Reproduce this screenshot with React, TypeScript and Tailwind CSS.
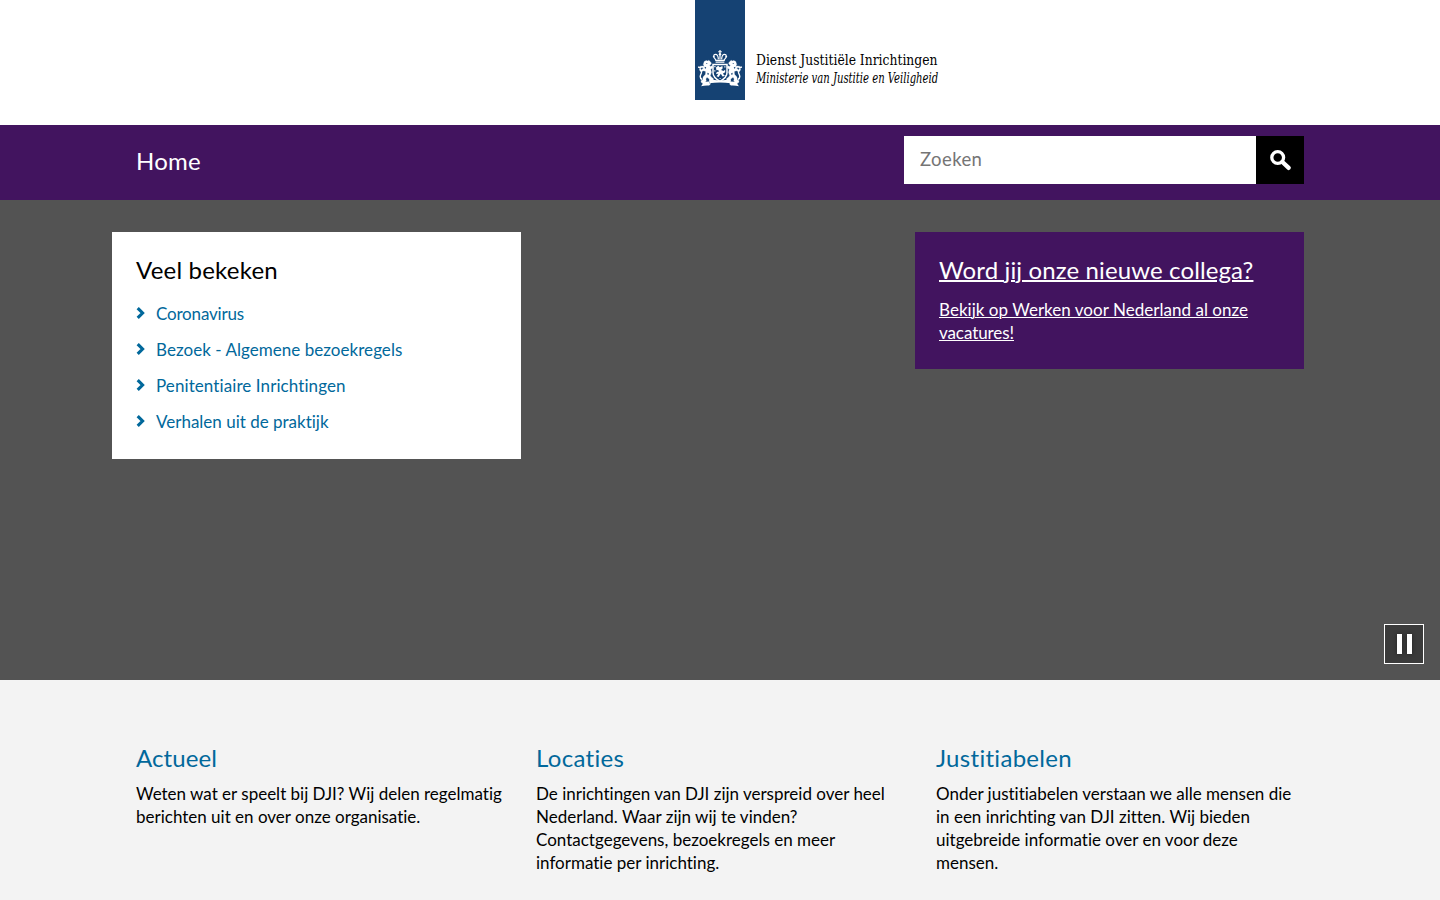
function Crest() {
  return (
    <g fill="#fff">
      {/* crown */}
      <path d="M24.400 50h1.200v1.200h1.200v1.100h-1.200v1h-1.200v-1h-1.200v-1.100h1.200z" />
      <g fill="none" stroke="#fff" strokeWidth="1.200">
        <path d="M21 60c-3.400-3-2.600-5.600-.4-5.600 1.800 0 2.600 2 2.800 5M29 60c3.400-3 2.600-5.600.4-5.600-1.800 0-2.600 2-2.800 5M25 53.500v6" />
        <path d="M20.200 60.400h9.600M20.600 62.200h8.800" />
      </g>
      <circle cx="25" cy="54.300" r="1.200" />
      <circle cx="18.700" cy="56.600" r=".9" />
      <circle cx="31.300" cy="56.600" r=".9" />
      {/* shield */}
      <path
        d="M18 64.400h14v8.400c0 4-3 6.400-7 8.600-4-2.200-7-4.600-7-8.600z"
        fill="#154273"
        stroke="#fff"
        strokeWidth="1.500"
      />
      <path d="M21 67.500l2.200-1.700 1.600 1.400 2.600-1.200.3 2.300-1.600 1.600 2.300 1.200 1.800-1.300v2.500l-2.200 1.300 1.500 2.500-2 .3-1.700-2.600-2.200 3.200-2-.7 1.800-2.500-2.400.3.800-2.100 2.300-.6-1-1.500-1.700.3z" />
      <path d="M19.300 66h1.200v1.200h-1.200zM29.300 66.200h1.200v1.200h-1.200zM19.200 70.200h1.200v1.200h-1.200zM29.600 75h1v1h-1zM24.600 78h1v1h-1z" />
      <g id="lion">
        {/* head, mane and body */}
        <path
          d="M9.200 61.500l2-.9 1.700.5.900-.8 1.300 1.100 1.300 1.700-.5 1.500-1.300.5.600 1.400 2.200-.8.300 2.300-2 1.300.8 3-1.200 3.400 1.600 1.900 1.600 1.200-.4 1.900-3.300-.2-.5-1.500-2.300-1.700-1.200 1.600.5 2-1.200 1.200-3.900.1-.2-1.500 1.800-1 .3-2.800 2.400-2.600.2-2.700-1.900-.9-2.600 1-1.500-1.300.2-1.200 1.700.5 1.900-1.700-1.700-.4-1.500 1-1.200-1.200 1.200-1.100 2.100-.3 1.800.2-.9-1.700z"
          stroke="#fff"
          strokeWidth=".3"
        />
        {/* tail */}
        <path
          d="M7.200 79.500c-3.400-1.500-1.600-4.800-.8-6.500.9-2.300-2.100-2.400-1.100-4.600M5 67.600l-1.900-.6"
          fill="none"
          stroke="#fff"
          strokeWidth="1.400"
        />
        <path d="M11.200 63.200h1.100v.9h-1.100zM9.900 66.700l1.300.7-.4 1.300-1.200-.6zM12.600 72.700l1.200.5-.3 1.700-1.200-.6z" fill="#154273" />
      </g>
      <use href="#lion" transform="matrix(-1 0 0 1 50 0)" />
      {/* ribbon */}
      <path d="M14.200 79.600c7 1.100 14.600 1.100 21.600 0v3.700c-7-1-14.600-1-21.600 0zM13.800 81.400l-7.800.9 1.800 1.500-1.700 2.400c2.600-.6 5.400-.8 8-.6l1.600-1.700zM36.200 81.400l7.800.9-1.800 1.500 1.700 2.400c-2.600-.6-5.400-.8-8-.6l-1.600-1.700z" />
    </g>
  );
}

function Logo() {
  return (
    <svg width="250" height="100" viewBox="0 0 250 100" className="block" role="img" aria-label="Dienst Justitiële Inrichtingen">
      <rect width="50" height="100" fill="#154273" />
      <Crest />
      <text
        transform="translate(61 65) scale(.948 1)"
        className="fill-black text-[14.500px] font-['DejaVu_Serif',serif] [font-stretch:75%]"
      >
        Dienst Justitiële Inrichtingen
      </text>
      <text
        transform="translate(61 82.500) scale(.8 1)"
        className="fill-black text-[14px] italic font-['DejaVu_Serif',serif] [font-stretch:75%]"
      >
        Ministerie van Justitie en Veiligheid
      </text>
    </svg>
  );
}

function Chevron() {
  return (
    <svg width="20" height="12" viewBox="0 0 20 12" className="-mt-px shrink-0" fill="none" stroke="#01689b" strokeWidth="3.100">
      <path d="M1.700 1.100l4.900 4.900-4.900 4.900" />
    </svg>
  );
}

const popular = [
  { label: "Coronavirus", tracking: "tracking-[-0.18px]" },
  { label: "Bezoek - Algemene bezoekregels", tracking: "tracking-[0.04px]" },
  { label: "Penitentiaire Inrichtingen", tracking: "tracking-[0.09px]" },
  { label: "Verhalen uit de praktijk", tracking: "tracking-normal" },
];

const topics = [
  {
    title: "Actueel",
    tracking: "tracking-[0.08px]",
    lines: ["Weten wat er speelt bij DJI? Wij delen regelmatig", "berichten uit en over onze organisatie."],
  },
  {
    title: "Locaties",
    tracking: "tracking-[0.3px]",
    lines: [
      "De inrichtingen van DJI zijn verspreid over heel",
      "Nederland. Waar zijn wij te vinden?",
      "Contactgegevens, bezoekregels en meer",
      "informatie per inrichting.",
    ],
  },
  {
    title: "Justitiabelen",
    tracking: "tracking-[0.3px]",
    lines: [
      "Onder justitiabelen verstaan we alle mensen die",
      "in een inrichting van DJI zitten. Wij bieden",
      "uitgebreide informatie over en voor deze",
      "mensen.",
    ],
  },
];

export default function App() {
  return (
    <div className="flex h-[900px] w-[1440px] flex-col overflow-hidden bg-[#f3f3f3] font-['Lato',sans-serif] text-[17px] leading-[23px] text-black [font-variant-ligatures:none]">
      <header className="flex h-[125px] shrink-0 bg-white pl-[695px]">
        <Logo />
      </header>

      <nav className="h-[75px] shrink-0 bg-[#42145f]">
        <div className="mx-auto flex w-[1200px] items-start justify-between px-4">
          <a className="pt-5 text-2xl leading-8 tracking-[0.2px] text-white">Home</a>
          <form className="mt-[11px] flex h-12 w-[400px]">
            <input
              className="min-w-0 flex-1 bg-white px-4 pb-0.5 text-[18.500px] tracking-[0.4px] placeholder:text-[#757575]"
              placeholder="Zoeken"
            />
            <button type="button" aria-label="Zoek" className="flex size-12 items-center justify-center bg-black">
              <svg width="24" height="24" viewBox="0 0 24 24" fill="none" stroke="#fff">
                <circle cx="9.700" cy="9.500" r="5.900" strokeWidth="3.300" />
                <path d="M14.400 14l6.300 5.900" strokeWidth="4.300" strokeLinecap="round" />
              </svg>
            </button>
          </form>
        </div>
      </nav>

      <section className="relative h-[480px] shrink-0 bg-[#535353]">
        <div className="mx-auto flex w-[1200px] items-start justify-between px-4 pt-8">
          <div className="-ml-6 h-[227px] w-[409px] bg-white px-6 pt-[22px]">
            <h2 className="text-2xl leading-8 tracking-[0.2px]">Veel bekeken</h2>
            <ul className="mt-4 flex flex-col gap-[13px] text-[#01689b]">
              {popular.map((item) => (
                <li key={item.label} className="flex items-center">
                  <Chevron />
                  <a className={item.tracking}>{item.label}</a>
                </li>
              ))}
            </ul>
          </div>
          <a className="block h-[137px] w-[389px] bg-[#42145f] px-6 pt-[22px] text-white">
            <h2 className="text-2xl leading-8 tracking-[0.12px] whitespace-nowrap underline decoration-2">
              Word jij onze nieuwe collega?
            </h2>
            <p className="mt-3 whitespace-nowrap tracking-[0.03px] underline decoration-1">
              Bekijk op Werken voor Nederland al onze
              <br />
              <span className="tracking-[-0.08px]">vacatures!</span>
            </p>
          </a>
        </div>
        <button
          type="button"
          aria-label="Pauze"
          className="absolute right-4 bottom-4 flex size-10 items-center justify-center gap-[5px] border border-white bg-[#3b3b3b]"
        >
          <span className="h-5 w-[5px] bg-white shadow-[0_0_4px_rgba(0,0,0,0.4)]" />
          <span className="h-5 w-[5px] bg-white shadow-[0_0_4px_rgba(0,0,0,0.4)]" />
        </button>
      </section>

      <main className="mx-auto grid w-[1200px] grid-cols-3 pt-[62px]">
        {topics.map((topic) => (
          <article key={topic.title} className="px-4">
            <h2 className="text-2xl leading-8 text-[#01689b]">
              <span className={topic.tracking}>{topic.title}</span>
            </h2>
            <p className="mt-2 whitespace-nowrap">
              {topic.lines.map((line) => (
                <span key={line} className="block">
                  {line}
                </span>
              ))}
            </p>
          </article>
        ))}
      </main>
    </div>
  );
}
